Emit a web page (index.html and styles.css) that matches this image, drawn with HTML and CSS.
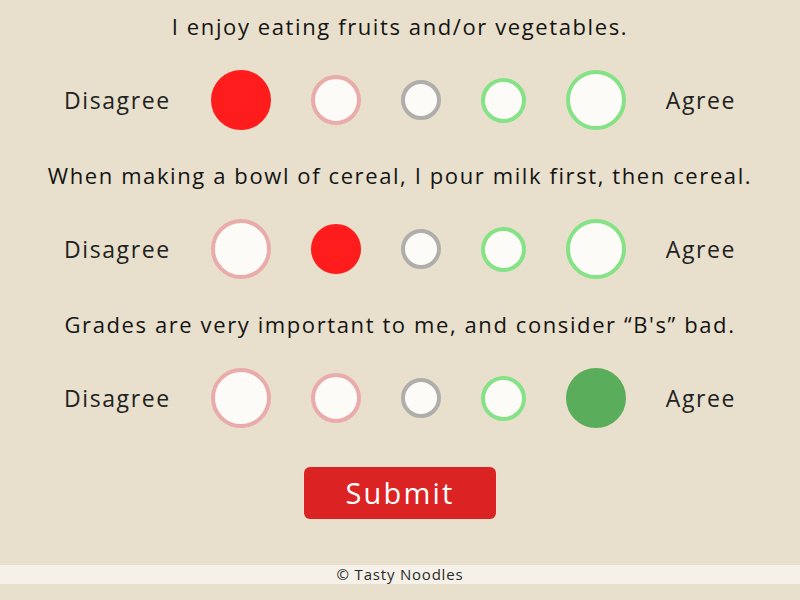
FILE: index.html
```html
<!DOCTYPE html>
<html lang="en">
<head>
<meta charset="utf-8">
<title>Survey</title>
<link rel="stylesheet" href="styles.css">
</head>
<body>
<main class="survey">
  <section class="question">
    <h2 class="prompt">I enjoy eating fruits and/or vegetables.</h2>
    <div class="scale">
      <span class="label">Disagree</span>
      <span class="dot dot-xl dot-neg is-selected-neg"></span>
      <span class="dot dot-md dot-neg"></span>
      <span class="dot dot-sm dot-neutral"></span>
      <span class="dot dot-ms dot-pos"></span>
      <span class="dot dot-xl dot-pos"></span>
      <span class="label">Agree</span>
    </div>
  </section>
  <section class="question">
    <h2 class="prompt">When making a bowl of cereal, I pour milk first, then cereal.</h2>
    <div class="scale">
      <span class="label">Disagree</span>
      <span class="dot dot-xl dot-neg"></span>
      <span class="dot dot-md dot-neg is-selected-neg"></span>
      <span class="dot dot-sm dot-neutral"></span>
      <span class="dot dot-ms dot-pos"></span>
      <span class="dot dot-xl dot-pos"></span>
      <span class="label">Agree</span>
    </div>
  </section>
  <section class="question">
    <h2 class="prompt">Grades are very important to me, and consider “B's” bad.</h2>
    <div class="scale">
      <span class="label">Disagree</span>
      <span class="dot dot-xl dot-neg"></span>
      <span class="dot dot-md dot-neg"></span>
      <span class="dot dot-sm dot-neutral"></span>
      <span class="dot dot-ms dot-pos"></span>
      <span class="dot dot-xl dot-pos is-selected-pos"></span>
      <span class="label">Agree</span>
    </div>
  </section>
  <div class="actions">
    <button class="submit" type="button">Submit</button>
  </div>
</main>
<footer class="footer">© Tasty Noodles</footer>
</body>
</html>
```
FILE: styles.css
```css
* { box-sizing: border-box; }
html, body {
  margin: 0;
  padding: 0;
  background: #e8e0cc;
  font-family: "Open Sans", "Noto Sans", sans-serif;
  color: #1e1e1e;
}
.survey {
  padding-top: 12px;
}
.question {
  margin-bottom: 31px;
}
.prompt {
  margin: 0 0 30px;
  font-size: 22px;
  line-height: 28px;
  font-weight: 500;
  letter-spacing: 1.6px;
  text-align: center;
  color: #141414;
}
.scale {
  height: 60px;
  display: flex;
  align-items: center;
  justify-content: center;
  gap: 40px;
}
.label {
  font-size: 23px;
  font-weight: 400;
  letter-spacing: 1.6px;
  color: #222;
}
.dot {
  display: block;
  border-radius: 50%;
  background: #fcfbf8;
  border: 4px solid;
}
.dot-xl { width: 60px; height: 60px; }
.dot-md { width: 50px; height: 50px; }
.dot-ms { width: 45px; height: 45px; }
.dot-sm { width: 40px; height: 40px; }
.dot-neg { border-color: #eaabab; }
.dot-neutral { border-color: #b0aeab; }
.dot-pos { border-color: #86e286; }
.is-selected-neg { background: #ff1c1c; border-color: #ff1c1c; }
.is-selected-pos { background: #5aad5a; border-color: #5aad5a; }
.actions {
  display: flex;
  justify-content: center;
  padding-top: 8px;
}
.submit {
  width: 192px;
  height: 52px;
  border: none;
  border-radius: 6px;
  background: #dc2323;
  color: #fff;
  font-family: inherit;
  font-size: 29px;
  font-weight: 400;
  letter-spacing: 2.2px;
  padding: 0 0 2px;
}
.footer {
  margin-top: 46px;
  height: 19px;
  background: #f5f1e8;
  text-align: center;
  font-size: 15px;
  line-height: 19px;
  font-weight: 400;
  letter-spacing: 0.8px;
  color: #2a2a2a;
}
```
